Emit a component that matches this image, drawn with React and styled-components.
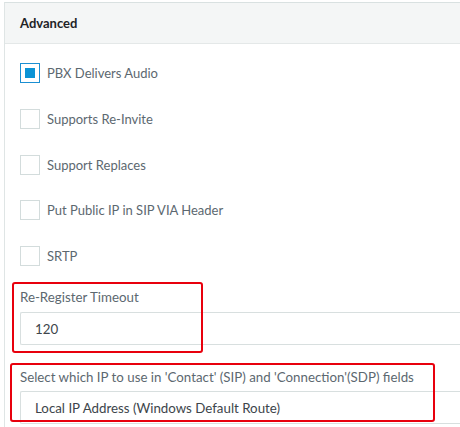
import React from 'react';
import styled, { createGlobalStyle } from 'styled-components';

const GlobalStyle = createGlobalStyle`
  html, body {
    margin: 0;
    padding: 0;
    background: #ffffff;
    overflow: hidden;
  }
  body {
    font-family: Lato, "Noto Sans", sans-serif;
  }
`;

const Panel = styled.section`
  margin: 2px 0 0 4px;
  border-top: 1px solid #d9e1e1;
  border-left: 1px solid #dfe5e5;
  min-height: 430px;
`;

const PanelHeader = styled.div`
  height: 40px;
  display: flex;
  align-items: center;
  padding-left: 15px;
  background: #f4f6f6;
  border-bottom: 1px solid #e4e8e8;
  font-size: 13px;
  font-weight: 700;
  color: #1f2326;
`;

const PanelBody = styled.div`
  padding: 19px 0 0 15px;
  display: flex;
  flex-direction: column;
`;

const CheckList = styled.div`
  display: flex;
  flex-direction: column;
  gap: 25.75px;
`;

const CheckRow = styled.label`
  display: flex;
  align-items: center;
  gap: 7px;
  height: 20px;
  font-size: 13px;
  color: #5c6870;
`;

const Box = styled.span`
  box-sizing: border-box;
  width: 20px;
  height: 20px;
  flex: none;
  display: flex;
  align-items: center;
  justify-content: center;
  border: ${p => (p.$checked ? '1.5px solid #1b8fd2' : '1px solid #d3dcdc')};
  background: #fff;
`;

const Tick = styled.span`
  width: 10px;
  height: 10px;
  background: #0b93d5;
`;

const Field = styled.div`
  position: relative;
  display: flex;
  flex-direction: column;
  margin-top: ${p => p.$top}px;
`;

const FieldLabel = styled.div`
  font-size: 13.3px;
  line-height: 18px;
  color: #5c6870;
  margin-bottom: ${p => p.$gap}px;
`;

const Input = styled.div`
  box-sizing: border-box;
  height: 33px;
  display: flex;
  align-items: center;
  padding: 0 14px;
  border: 1px solid #d8dfdf;
  border-right: none;
  border-radius: 2px 0 0 2px;
  font-size: 13.3px;
  color: #3d454b;
`;

const Highlight = styled.div`
  position: absolute;
  box-sizing: border-box;
  border: 2px solid #e8000d;
  border-radius: 3px;
  pointer-events: none;
  left: ${p => p.$left}px;
  top: ${p => p.$top}px;
  width: ${p => p.$width}px;
  height: ${p => p.$height}px;
`;

const options = [
  { label: 'PBX Delivers Audio', checked: true },
  { label: 'Supports Re-Invite' },
  { label: 'Support Replaces' },
  { label: 'Put Public IP in SIP VIA Header' },
  { label: 'SRTP' },
];

export default function App() {
  return (
    <>
      <GlobalStyle />
      <Panel>
        <PanelHeader>Advanced</PanelHeader>
        <PanelBody>
          <CheckList>
            {options.map(o => (
              <CheckRow key={o.label}>
                <Box $checked={o.checked}>{o.checked && <Tick />}</Box>
                {o.label}
              </CheckRow>
            ))}
          </CheckList>

          <Field $top={22}>
            <FieldLabel $gap={6}>Re-Register Timeout</FieldLabel>
            <Input>120</Input>
            <Highlight $left={-8} $top={-6} $width={191} $height={71} />
          </Field>

          <Field $top={23}>
            <FieldLabel $gap={5}>
              Select which IP to use in 'Contact' (SIP) and 'Connection'(SDP) fields
            </FieldLabel>
            <Input>Local IP Address (Windows Default Route)</Input>
            <Highlight $left={-10} $top={-5} $width={425} $height={59} />
          </Field>
        </PanelBody>
      </Panel>
    </>
  );
}
